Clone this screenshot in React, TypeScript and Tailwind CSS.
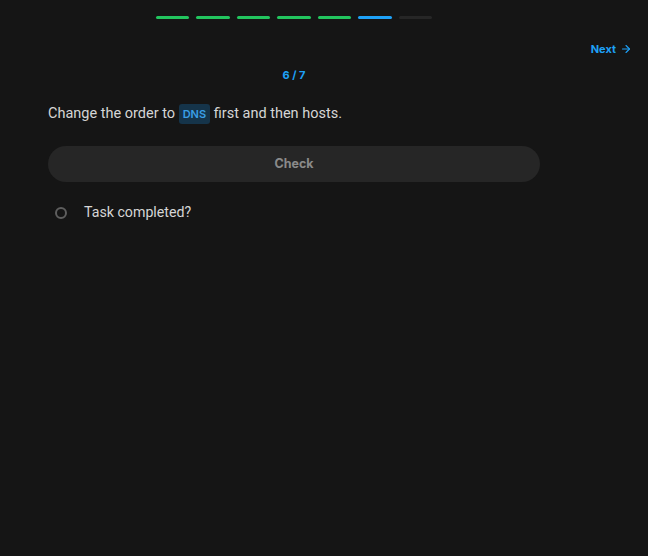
import { ArrowRight } from 'lucide-react';

const steps = ['done', 'done', 'done', 'done', 'done', 'current', 'todo'];

export default function App() {
  return (
    <div className="min-h-[556px] w-full bg-[#151515] font-['Inter',sans-serif] text-[#d4d4d4]">
      {/* Progress */}
      <div className="ml-12 flex w-[492px] justify-center gap-[7px] pt-4">
        {steps.map((s, i) => (
          <div
            key={i}
            className={
              s === 'done'
                ? 'h-[3px] w-[33.5px] rounded-full bg-[#22c55e]'
                : s === 'current'
                ? 'h-[3px] w-[33.5px] rounded-full bg-[#1ea1f7]'
                : 'h-[3px] w-[33.5px] rounded-full bg-[#262626]'
            }
          />
        ))}
      </div>

      <div className="flex justify-end pr-[16px] pt-[22px]">
        <button className="flex items-center gap-1 text-[11px] font-bold text-[#1ea1f7]">
          Next
          <ArrowRight className="h-3 w-3" strokeWidth={2.2} />
        </button>
      </div>

      <div className="ml-12 w-[492px]">
        <div className="mt-[9px] text-center text-[11px] font-bold text-[#1ea1f7]">6 / 7</div>

        <p className="mt-[19px] font-['Roboto',sans-serif] text-[14.5px] leading-6 text-[#d6d6d6]">
          Change the order to{' '}
          <code className="rounded-[3px] bg-[#15344a] px-[4px] py-[3px] font-['Inter',sans-serif] text-[11px] font-semibold text-[#3a9fe6]">
            DNS
          </code>{' '}
          first and then hosts.
        </p>

        <button className="mt-[20px] h-9 w-full rounded-full bg-[#262626] text-[12.5px] font-bold text-[#8a8a8a]">
          Check
        </button>

        <label className="mt-[20px] flex items-center gap-[17px] pl-[7px]">
          <span className="h-3 w-3 rounded-full border-[2.5px] border-[#5e5e5e]" />
          <span className="font-['Roboto',sans-serif] text-[14.2px] text-[#d6d6d6]">Task completed?</span>
        </label>
      </div>
    </div>
  );
}
